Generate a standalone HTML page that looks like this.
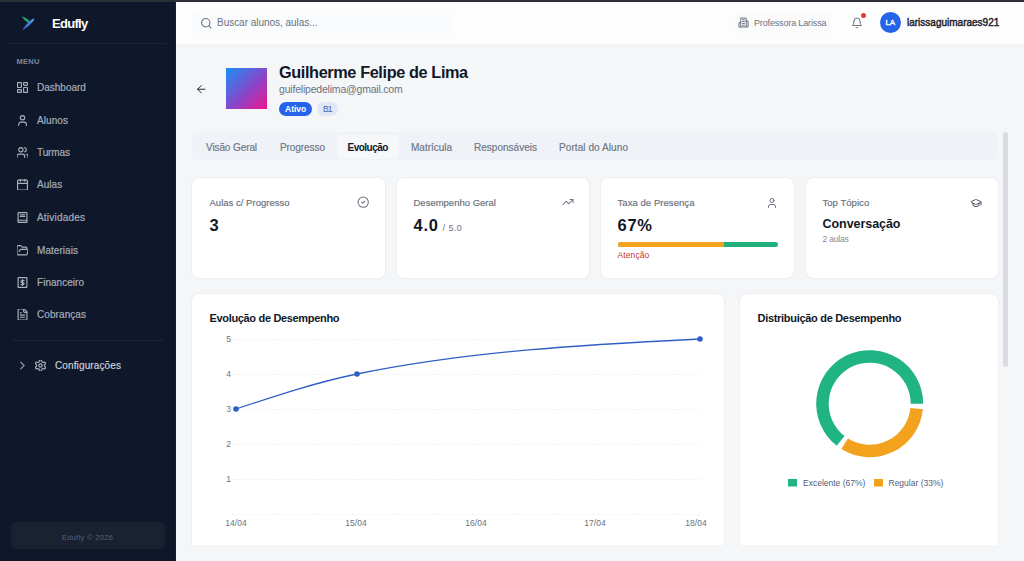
<!DOCTYPE html>
<html><head><meta charset="utf-8">
<style>
*{box-sizing:border-box;margin:0;padding:0}
html,body{width:1024px;height:561px;overflow:hidden;background:#f5f6f8;font-family:"Liberation Sans", sans-serif}
.r{position:absolute}
.t{position:absolute;line-height:1;white-space:nowrap}
</style></head><body>
<div class="r" style="left:176px;top:0px;width:848px;height:561px;background:#f5f6f8;border-radius:0px;"></div>
<div class="r" style="left:176px;top:0px;width:848px;height:44px;background:#fdfdfd;border-radius:0px;"></div>
<div class="r" style="left:176px;top:44px;width:848px;height:2px;background:#f2f3f4;border-radius:0px;"></div>
<div class="r" style="left:0px;top:0px;width:176px;height:561px;background:#0f172a;border-radius:0px;"></div>
<div class="r" style="left:175px;top:0px;width:1px;height:561px;background:#171f30;border-radius:0px;"></div>
<div class="r" style="left:0px;top:0px;width:1024px;height:2px;background:#2b3038;border-radius:0px;"></div>
<svg class="r" style="left:20px;top:15px;" width="16" height="16" viewBox="0 0 16 16"><defs><linearGradient id="bg1" x1="1" y1="0" x2="0" y2="1"><stop offset="0" stop-color="#4aa3f0"/><stop offset="1" stop-color="#3a5fc8"/></linearGradient></defs><path d="M1.6 1.2 Q5.5 2.2 9.2 5.6 L8.6 8.2 Q4.5 6 1.6 1.2 Z" fill="#22a57a"/><path d="M14.2 3.6 Q14.4 5.2 13 6.6 L8.6 11 L3.6 14.8 L2.8 14 L6.6 9.2 L10.4 5.4 Q12.4 3.6 14.2 3.6 Z" fill="url(#bg1)"/></svg>
<div class="t" style="left:52px;top:17.00px;font-size:13px;color:#ffffff;font-weight:bold;letter-spacing:-0.7px;">Edufly</div>
<div class="r" style="left:8px;top:43px;width:158px;height:1px;background:#1b2435;border-radius:0px;"></div>
<div class="t" style="left:16.5px;top:58.00px;font-size:7.5px;color:#7f8797;font-weight:bold;letter-spacing:0.3px;">MENU</div>
<svg class="r" style="left:17px;top:82px;" width="11" height="11" viewBox="2 2 20 20"><g fill="none" stroke="#a9b0bc" stroke-width="2.1" stroke-linecap="round" stroke-linejoin="round"><rect width="7" height="9" x="3" y="3" rx="1"/><rect width="7" height="5" x="14" y="3" rx="1"/><rect width="7" height="9" x="14" y="12" rx="1"/><rect width="7" height="5" x="3" y="16" rx="1"/></g></svg>
<div class="t" style="left:37px;top:83.00px;font-size:10px;color:#a9b0bc;font-weight:normal;letter-spacing:0px;-webkit-text-stroke:0.18px #a9b0bc;">Dashboard</div>
<svg class="r" style="left:17px;top:115px;" width="11" height="11" viewBox="2 2 20 20"><g fill="none" stroke="#a9b0bc" stroke-width="2.1" stroke-linecap="round" stroke-linejoin="round"><path d="M19 21v-2a4 4 0 0 0-4-4H9a4 4 0 0 0-4 4v2"/><circle cx="12" cy="7" r="4"/></g></svg>
<div class="t" style="left:37px;top:116.00px;font-size:10px;color:#a9b0bc;font-weight:normal;letter-spacing:0.08px;-webkit-text-stroke:0.18px #a9b0bc;">Alunos</div>
<svg class="r" style="left:17px;top:147px;" width="11" height="11" viewBox="2 2 20 20"><g fill="none" stroke="#a9b0bc" stroke-width="2.1" stroke-linecap="round" stroke-linejoin="round"><path d="M16 21v-2a4 4 0 0 0-4-4H6a4 4 0 0 0-4 4v2"/><circle cx="9" cy="7" r="4"/><path d="M22 21v-2a4 4 0 0 0-3-3.87"/><path d="M16 3.13a4 4 0 0 1 0 7.75"/></g></svg>
<div class="t" style="left:37px;top:148.00px;font-size:10px;color:#a9b0bc;font-weight:normal;letter-spacing:-0.1px;-webkit-text-stroke:0.18px #a9b0bc;">Turmas</div>
<svg class="r" style="left:17px;top:179px;" width="11" height="11" viewBox="2 2 20 20"><g fill="none" stroke="#a9b0bc" stroke-width="2.1" stroke-linecap="round" stroke-linejoin="round"><path d="M8 2v4"/><path d="M16 2v4"/><rect width="18" height="18" x="3" y="4" rx="2"/><path d="M3 10h18"/></g></svg>
<div class="t" style="left:37px;top:180.00px;font-size:10px;color:#a9b0bc;font-weight:normal;letter-spacing:0.05px;-webkit-text-stroke:0.18px #a9b0bc;">Aulas</div>
<svg class="r" style="left:17px;top:212px;" width="11" height="11" viewBox="2 2 20 20"><g fill="none" stroke="#a9b0bc" stroke-width="2.1" stroke-linecap="round" stroke-linejoin="round"><rect x="4" y="3" width="16" height="18" rx="1"/><path d="M8 7h8M8 10h8M4 17h16"/></g></svg>
<div class="t" style="left:37px;top:213.00px;font-size:10px;color:#a9b0bc;font-weight:normal;letter-spacing:0.2px;-webkit-text-stroke:0.18px #a9b0bc;">Atividades</div>
<svg class="r" style="left:17px;top:245px;" width="11" height="11" viewBox="2 2 20 20"><g fill="none" stroke="#a9b0bc" stroke-width="2.1" stroke-linecap="round" stroke-linejoin="round"><path d="m6 14 1.5-2.9A2 2 0 0 1 9.24 10H20a2 2 0 0 1 1.94 2.5l-1.54 6a2 2 0 0 1-1.95 1.5H4a2 2 0 0 1-2-2V5a2 2 0 0 1 2-2h3.9a2 2 0 0 1 1.69.9l.81 1.2a2 2 0 0 0 1.67.9H18a2 2 0 0 1 2 2v2"/></g></svg>
<div class="t" style="left:37px;top:246.00px;font-size:10px;color:#a9b0bc;font-weight:normal;letter-spacing:0.05px;-webkit-text-stroke:0.18px #a9b0bc;">Materiais</div>
<svg class="r" style="left:17px;top:277px;" width="11" height="11" viewBox="2 2 20 20"><g fill="none" stroke="#a9b0bc" stroke-width="2.1" stroke-linecap="round" stroke-linejoin="round"><rect x="4" y="3" width="16" height="18" rx="1"/><path d="M15 8.5h-4a1.8 1.8 0 0 0 0 3.6h2a1.8 1.8 0 0 1 0 3.6H9M12 6.5v11"/></g></svg>
<div class="t" style="left:37px;top:278.00px;font-size:10px;color:#a9b0bc;font-weight:normal;letter-spacing:0.03px;-webkit-text-stroke:0.18px #a9b0bc;">Financeiro</div>
<svg class="r" style="left:17px;top:309px;" width="11" height="11" viewBox="2 2 20 20"><g fill="none" stroke="#a9b0bc" stroke-width="2.1" stroke-linecap="round" stroke-linejoin="round"><path d="M15 2H6a2 2 0 0 0-2 2v16a2 2 0 0 0 2 2h12a2 2 0 0 0 2-2V7Z"/><path d="M14 2v4a2 2 0 0 0 2 2h4"/><path d="M10 9H8"/><path d="M16 13H8"/><path d="M16 17H8"/></g></svg>
<div class="t" style="left:37px;top:310.00px;font-size:10px;color:#a9b0bc;font-weight:normal;letter-spacing:0.08px;-webkit-text-stroke:0.18px #a9b0bc;">Cobranças</div>
<div class="r" style="left:12px;top:340px;width:152px;height:1px;background:#1b2435;border-radius:0px;"></div>
<svg class="r" style="left:17px;top:360px;" width="11" height="11" viewBox="2 2 20 20"><path d="m9 18 6-6-6-6" fill="none" stroke="#8c94a3" stroke-width="2.2" stroke-linecap="round" stroke-linejoin="round"/></svg>
<svg class="r" style="left:35px;top:360px;" width="11" height="11" viewBox="2 2 20 20"><g fill="none" stroke="#a9b0bc" stroke-width="2.1" stroke-linecap="round" stroke-linejoin="round"><path d="M12.22 2h-.44a2 2 0 0 0-2 2v.18a2 2 0 0 1-1 1.73l-.43.25a2 2 0 0 1-2 0l-.15-.08a2 2 0 0 0-2.73.73l-.22.38a2 2 0 0 0 .73 2.73l.15.1a2 2 0 0 1 1 1.72v.51a2 2 0 0 1-1 1.74l-.15.09a2 2 0 0 0-.73 2.73l.22.38a2 2 0 0 0 2.73.73l.15-.08a2 2 0 0 1 2 0l.43.25a2 2 0 0 1 1 1.73V20a2 2 0 0 0 2 2h.44a2 2 0 0 0 2-2v-.18a2 2 0 0 1 1-1.73l.43-.25a2 2 0 0 1 2 0l.15.08a2 2 0 0 0 2.73-.73l.22-.39a2 2 0 0 0-.73-2.73l-.15-.08a2 2 0 0 1-1-1.74v-.5a2 2 0 0 1 1-1.74l.15-.09a2 2 0 0 0 .73-2.73l-.22-.38a2 2 0 0 0-2.73-.73l-.15.08a2 2 0 0 1-2 0l-.43-.25a2 2 0 0 1-1-1.73V4a2 2 0 0 0-2-2z"/><circle cx="12" cy="12" r="3"/></g></svg>
<div class="t" style="left:55px;top:361.00px;font-size:10px;color:#cdd2da;font-weight:normal;letter-spacing:0.12px;-webkit-text-stroke:0.18px #cdd2da;">Configurações</div>
<div class="r" style="left:11px;top:522px;width:154px;height:27px;background:#1a2232;border-radius:6px;"></div>
<div class="t" style="left:62px;top:534.00px;font-size:7.5px;color:#556074;font-weight:normal;letter-spacing:0.3px;">Edufly © 2026</div>
<div class="r" style="left:192px;top:10px;width:260px;height:24px;background:#fafbfc;border-radius:6px;"></div>
<svg class="r" style="left:199.5px;top:17px" width="12.5" height="12.5" viewBox="0 0 24 24" fill="none" stroke="#6b7280" stroke-width="2.1" stroke-linecap="round" stroke-linejoin="round"><circle cx="11" cy="11" r="8"/><path d="m21 21-4.3-4.3"/></svg>
<div class="t" style="left:217px;top:18.00px;font-size:10px;color:#6b7280;font-weight:normal;letter-spacing:-0.03px;">Buscar alunos, aulas...</div>
<div class="r" style="left:735px;top:12px;width:96px;height:21px;background:#fbfbfc;border-radius:5px;"></div>
<svg class="r" style="left:738px;top:17px" width="11" height="11" viewBox="0 0 24 24" fill="none" stroke="#6b7280" stroke-width="2.2" stroke-linecap="round" stroke-linejoin="round"><path d="M6 22V4a2 2 0 0 1 2-2h8a2 2 0 0 1 2 2v18Z"/><path d="M6 12H4a2 2 0 0 0-2 2v6a2 2 0 0 0 2 2h2"/><path d="M18 9h2a2 2 0 0 1 2 2v9a2 2 0 0 1-2 2h-2"/><path d="M10 6h4"/><path d="M10 10h4"/><path d="M10 14h4"/><path d="M10 18h4"/></svg>
<div class="t" style="left:754px;top:19.00px;font-size:9px;color:#6b7280;font-weight:normal;letter-spacing:-0.15px;">Professora Larissa</div>
<svg class="r" style="left:851px;top:17px" width="12" height="12" viewBox="0 0 24 24" fill="none" stroke="#6b7280" stroke-width="2" stroke-linecap="round" stroke-linejoin="round"><path d="M6 8a6 6 0 0 1 12 0c0 7 3 9 3 9H3s3-2 3-9"/><path d="M10.3 21a1.94 1.94 0 0 0 3.4 0"/></svg>
<div class="r" style="left:860.8px;top:12.8px;width:5px;height:5px;background:#e5383b;border-radius:3px;box-shadow:0 0 0 1px #fff"></div>
<div class="r" style="left:880px;top:12px;width:21px;height:21px;background:#2563eb;border-radius:11px;"></div>
<div class="t" style="left:885.5px;top:19.00px;font-size:8px;color:#ffffff;font-weight:normal;letter-spacing:-0.3px;-webkit-text-stroke:0.35px #fff;">LA</div>
<div class="t" style="left:907px;top:18.00px;font-size:10px;color:#1f2530;font-weight:normal;letter-spacing:0px;-webkit-text-stroke:0.45px #1f2530;">larissaguimaraes921</div>
<svg class="r" style="left:194.5px;top:82.5px" width="12.5" height="12.5" viewBox="0 0 24 24" fill="none" stroke="#1f2937" stroke-width="1.9" stroke-linecap="round" stroke-linejoin="round"><path d="m12 19-7-7 7-7"/><path d="M19 12H5"/></svg>
<div class="r" style="left:226px;top:68px;width:41px;height:41px;background:linear-gradient(135deg,#1a90f6 0%,#8a45c9 55%,#f0148c 100%);border-radius:0px;"></div>
<div class="t" style="left:279px;top:64.00px;font-size:16.3px;color:#111827;font-weight:bold;letter-spacing:-0.39px;">Guilherme Felipe de Lima</div>
<div class="t" style="left:279px;top:84.00px;font-size:10.5px;color:#6b7280;font-weight:normal;letter-spacing:-0.2px;">guifelipedelima@gmail.com</div>
<div class="r" style="left:279px;top:101.5px;width:33px;height:14.5px;background:#2563eb;border-radius:8px;"></div>
<div class="t" style="left:285px;top:105.00px;font-size:8.5px;color:#ffffff;font-weight:bold;letter-spacing:0px;">Ativo</div>
<div class="r" style="left:317px;top:101.5px;width:21px;height:14.5px;background:#e2e7f5;border-radius:8px;"></div>
<div class="t" style="left:323px;top:105.00px;font-size:8.5px;color:#3f5fb8;font-weight:normal;letter-spacing:-0.8px;">B1</div>
<div class="r" style="left:192px;top:132px;width:806px;height:28px;background:#eff2f7;border-radius:6px;"></div>
<div class="r" style="left:337px;top:135px;width:62px;height:24px;background:#f6f7f9;border-radius:5px;"></div>
<div class="t" style="left:206px;top:143.00px;font-size:10px;color:#6f7786;font-weight:normal;letter-spacing:-0.1px;-webkit-text-stroke:0.18px #6f7786;">Visão Geral</div>
<div class="t" style="left:280px;top:143.00px;font-size:10px;color:#6f7786;font-weight:normal;letter-spacing:-0.07px;-webkit-text-stroke:0.18px #6f7786;">Progresso</div>
<div class="t" style="left:347.5px;top:143.00px;font-size:10px;color:#111827;font-weight:bold;letter-spacing:-0.5px;">Evolução</div>
<div class="t" style="left:411px;top:143.00px;font-size:10px;color:#6f7786;font-weight:normal;letter-spacing:0px;-webkit-text-stroke:0.18px #6f7786;">Matrícula</div>
<div class="t" style="left:474px;top:143.00px;font-size:10px;color:#6f7786;font-weight:normal;letter-spacing:0.02px;-webkit-text-stroke:0.18px #6f7786;">Responsáveis</div>
<div class="t" style="left:559px;top:143.00px;font-size:10px;color:#6f7786;font-weight:normal;letter-spacing:0.08px;-webkit-text-stroke:0.18px #6f7786;">Portal do Aluno</div>
<div class="r" style="left:192px;top:178px;width:192.5px;height:100px;background:#ffffff;border-radius:7px;box-shadow:0 0 0 1px #eceef1, 0 1px 2px rgba(0,0,0,0.03)"></div>
<div class="r" style="left:396.5px;top:178px;width:192.5px;height:100px;background:#ffffff;border-radius:7px;box-shadow:0 0 0 1px #eceef1, 0 1px 2px rgba(0,0,0,0.03)"></div>
<div class="r" style="left:601px;top:178px;width:192.5px;height:100px;background:#ffffff;border-radius:7px;box-shadow:0 0 0 1px #eceef1, 0 1px 2px rgba(0,0,0,0.03)"></div>
<div class="r" style="left:805.5px;top:178px;width:192.5px;height:100px;background:#ffffff;border-radius:7px;box-shadow:0 0 0 1px #eceef1, 0 1px 2px rgba(0,0,0,0.03)"></div>
<div class="t" style="left:209.5px;top:198.00px;font-size:9.5px;color:#6b7280;font-weight:normal;letter-spacing:0.02px;-webkit-text-stroke:0.18px #6b7280;">Aulas c/ Progresso</div>
<svg class="r" style="left:357px;top:196.3px" width="12.4" height="12.4" viewBox="0 0 24 24" fill="none" stroke="#6b7280" stroke-width="2" stroke-linecap="round" stroke-linejoin="round"><circle cx="12" cy="12" r="10"/><path d="m9 12 2 2 4-4"/></svg>
<div class="t" style="left:209.5px;top:217.00px;font-size:16.5px;color:#111827;font-weight:bold;letter-spacing:0px;">3</div>
<div class="t" style="left:413.5px;top:198.00px;font-size:9.5px;color:#6b7280;font-weight:normal;letter-spacing:0px;-webkit-text-stroke:0.18px #6b7280;">Desempenho Geral</div>
<svg class="r" style="left:561.8px;top:196.2px" width="12" height="12" viewBox="0 0 24 24" fill="none" stroke="#6b7280" stroke-width="2.1" stroke-linecap="round" stroke-linejoin="round"><polyline points="22 7 13.5 15.5 8.5 10.5 2 17"/><polyline points="16 7 22 7 22 13"/></svg>
<div class="t" style="left:413.5px;top:217.00px;font-size:16.5px;color:#111827;font-weight:bold;letter-spacing:0.8px;">4.0</div>
<div class="t" style="left:442.5px;top:224.00px;font-size:9px;color:#6b7280;font-weight:normal;letter-spacing:0.45px;">/ 5.0</div>
<div class="t" style="left:617.5px;top:198.00px;font-size:9.5px;color:#6b7280;font-weight:normal;letter-spacing:0.06px;-webkit-text-stroke:0.18px #6b7280;">Taxa de Presença</div>
<svg class="r" style="left:765.5px;top:196.5px" width="12" height="12" viewBox="0 0 24 24" fill="none" stroke="#6b7280" stroke-width="2" stroke-linecap="round" stroke-linejoin="round"><path d="M19 21v-2a4 4 0 0 0-4-4H9a4 4 0 0 0-4 4v2"/><circle cx="12" cy="7" r="4"/></svg>
<div class="t" style="left:617.5px;top:217.00px;font-size:16.5px;color:#111827;font-weight:bold;letter-spacing:0.7px;">67%</div>
<div class="r" style="left:617.5px;top:241.5px;width:160px;height:5px;border-radius:3px;background:#22b07d;overflow:hidden"><div style="width:106.5px;height:5px;background:#f2a21d"></div></div>
<div class="t" style="left:617.5px;top:251.00px;font-size:8.5px;color:#c9352e;font-weight:normal;letter-spacing:0.1px;">Atenção</div>
<div class="t" style="left:822.5px;top:198.00px;font-size:9.5px;color:#6b7280;font-weight:normal;letter-spacing:0.04px;-webkit-text-stroke:0.18px #6b7280;">Top Tópico</div>
<svg class="r" style="left:970.4px;top:197px" width="12" height="12" viewBox="0 0 24 24" fill="none" stroke="#4b5563" stroke-width="2" stroke-linecap="round" stroke-linejoin="round"><path d="M21.42 10.922a1 1 0 0 0-.019-1.838L12.83 5.18a2 2 0 0 0-1.66 0L2.6 9.08a1 1 0 0 0 0 1.832l8.57 3.908a2 2 0 0 0 1.66 0z"/><path d="M22 10v6"/><path d="M6 12.5V16a6 3 0 0 0 12 0v-3.5"/></svg>
<div class="t" style="left:822.5px;top:218.00px;font-size:12.5px;color:#111827;font-weight:bold;letter-spacing:-0.05px;">Conversação</div>
<div class="t" style="left:822.5px;top:235.00px;font-size:8.5px;color:#858c99;font-weight:normal;letter-spacing:-0.2px;">2 aulas</div>
<div class="r" style="left:192px;top:294px;width:532px;height:251px;background:#ffffff;border-radius:7px 7px 0 0;box-shadow:0 0 0 1px #eceef1, 0 1px 2px rgba(0,0,0,0.03)"></div>
<div class="r" style="left:740px;top:294px;width:258px;height:251px;background:#ffffff;border-radius:7px 7px 0 0;box-shadow:0 0 0 1px #eceef1, 0 1px 2px rgba(0,0,0,0.03)"></div>
<div class="t" style="left:209.5px;top:313.00px;font-size:11px;color:#111827;font-weight:bold;letter-spacing:-0.33px;">Evolução de Desempenho</div>
<div class="t" style="left:757.5px;top:313.00px;font-size:11px;color:#111827;font-weight:bold;letter-spacing:-0.3px;">Distribuição de Desempenho</div>
<svg class="r" style="left:193px;top:294px;" width="530" height="251" viewBox="193 294 530 251"><g stroke="#f3f4f6" stroke-width="1" stroke-dasharray="3 2"><line x1="232" y1="339.5" x2="700" y2="339.5"/><line x1="232" y1="374.5" x2="700" y2="374.5"/><line x1="232" y1="409.5" x2="700" y2="409.5"/><line x1="232" y1="444.5" x2="700" y2="444.5"/><line x1="232" y1="479.5" x2="700" y2="479.5"/><line x1="232" y1="514.5" x2="700" y2="514.5"/></g><g font-family="Liberation Sans" font-size="8.5" fill="#6b7280" text-anchor="end"><text x="231" y="342">5</text><text x="231" y="377">4</text><text x="231" y="412">3</text><text x="231" y="447">2</text><text x="231" y="482">1</text></g><g font-family="Liberation Sans" font-size="8.5" fill="#6b7280" text-anchor="middle"><text x="236" y="526">14/04</text><text x="356" y="526">15/04</text><text x="476" y="526">16/04</text><text x="595" y="526">17/04</text><text x="696" y="526">18/04</text></g><path d="M236 409 C276.3 395.65 316.7 382.2 357 374 C471.3 350.7 585.7 344.8 700 339" fill="none" stroke="#2f5fc4" stroke-width="1.3"/><circle cx="236" cy="409" r="2.8" fill="#2f5fc4"/><circle cx="357" cy="374" r="2.8" fill="#2f5fc4"/><circle cx="700" cy="339" r="2.8" fill="#2f5fc4"/></svg>
<svg class="r" style="left:741px;top:294px;" width="257" height="251" viewBox="741 294 257 251"><path d="M923.20 403.70 A53.5 53.5 0 1 0 836.76 445.86 L844.46 436.01 A41 41 0 1 1 910.70 403.70 Z" fill="#20b383"/><path d="M841.35 449.07 A53.5 53.5 0 0 0 922.91 409.29 L910.48 407.99 A41 41 0 0 1 847.97 438.47 Z" fill="#f2a21d"/><rect x="788" y="479" width="9" height="7.5" fill="#20b383"/><rect x="874" y="479" width="9" height="7.5" fill="#f2a21d"/><g font-family="Liberation Sans" font-size="8.5" fill="#566071"><text x="803" y="485.8">Excelente (67%)</text><text x="888.5" y="485.8">Regular (33%)</text></g></svg>
<div class="r" style="left:186px;top:545px;width:818px;height:16px;background:#f5f6f8;border-radius:0px;"></div>
<div class="r" style="left:1003px;top:132px;width:5px;height:235px;background:#dadce2;border-radius:3px;"></div>
</body></html>
